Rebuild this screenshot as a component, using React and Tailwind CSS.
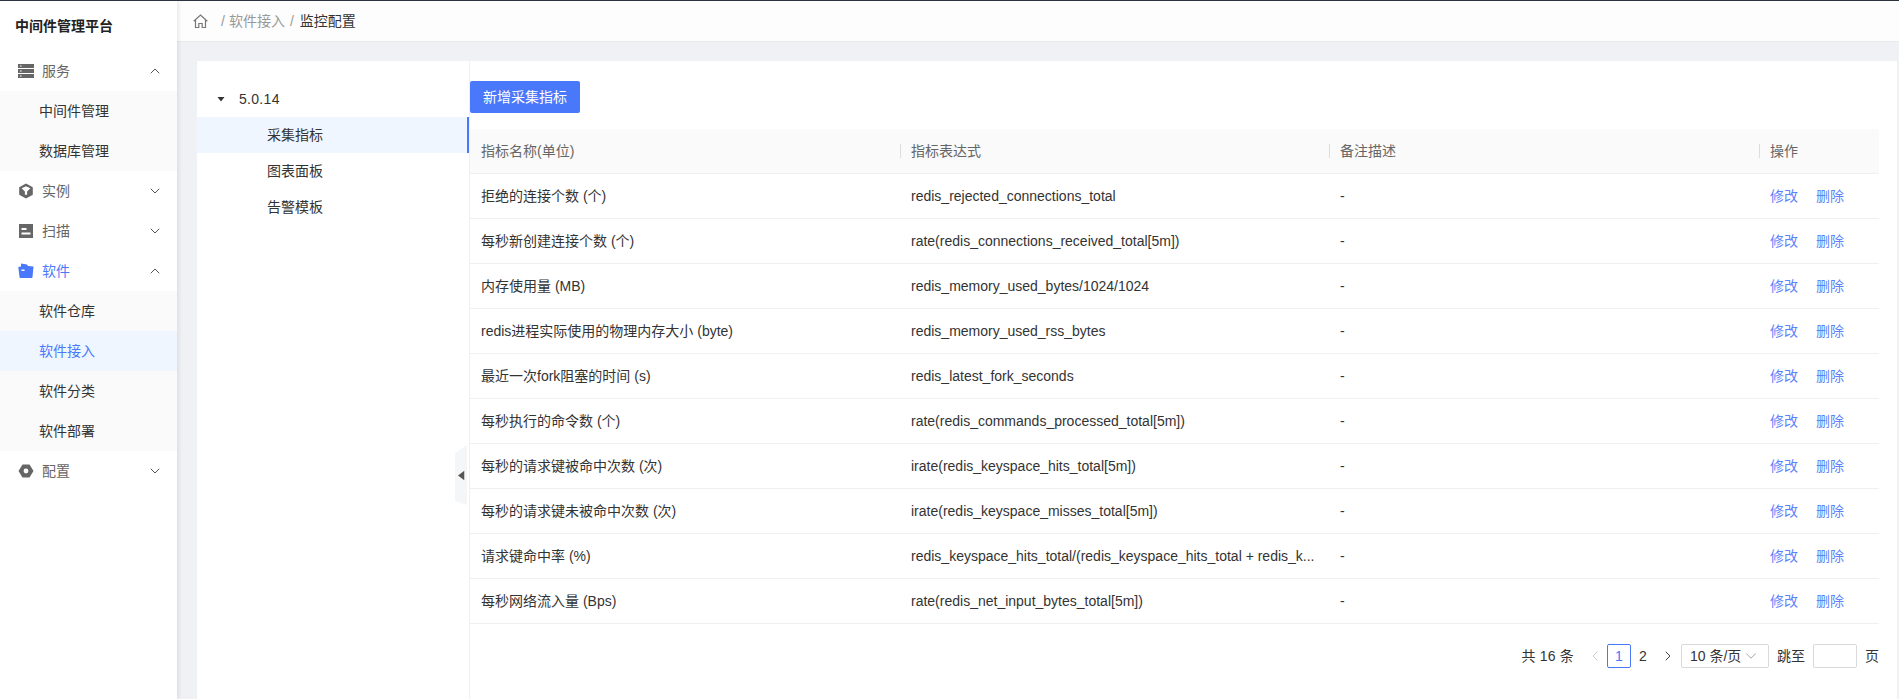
import { ChevronUp, ChevronDown, ChevronLeft, ChevronRight } from 'lucide-react';

const FONT = "font-['Liberation_Sans','Noto_Sans_CJK_SC',sans-serif]";

const ROWS = [
  ['拒绝的连接个数 (个)', 'redis_rejected_connections_total'],
  ['每秒新创建连接个数 (个)', 'rate(redis_connections_received_total[5m])'],
  ['内存使用量 (MB)', 'redis_memory_used_bytes/1024/1024'],
  ['redis进程实际使用的物理内存大小 (byte)', 'redis_memory_used_rss_bytes'],
  ['最近一次fork阻塞的时间 (s)', 'redis_latest_fork_seconds'],
  ['每秒执行的命令数 (个)', 'rate(redis_commands_processed_total[5m])'],
  ['每秒的请求键被命中次数 (次)', 'irate(redis_keyspace_hits_total[5m])'],
  ['每秒的请求键未被命中次数 (次)', 'irate(redis_keyspace_misses_total[5m])'],
  ['请求键命中率 (%)', 'redis_keyspace_hits_total/(redis_keyspace_hits_total + redis_k...'],
  ['每秒网络流入量 (Bps)', 'rate(redis_net_input_bytes_total[5m])'],
];

function ServerIcon() {
  return (
    <svg width="16" height="16" viewBox="0 0 16 16" className="text-[#666]">
      <path fill="currentColor" fillRule="evenodd" d="M0 1h16v4H0zM2 2.4h1.6V3.6H2zM0 6h16v4H0zM2 7.4h1.6V8.6H2zM0 11h16v4H0zM2 12.4h1.6V13.6H2z" />
    </svg>
  );
}

function CubeIcon() {
  return (
    <svg width="16" height="16" viewBox="0 0 16 16" className="text-[#666]">
      <path fill="currentColor" d="M8 .5l6.8 3.7v7.6L8 15.5l-6.8-3.7V4.2z" />
      <path fill="#fff" d="M3.6 5.2L8 3.2l4.4 2-3.3 3.4v3.2H6.9V8.6z" />
    </svg>
  );
}

function ScanIcon() {
  return (
    <svg width="16" height="16" viewBox="0 0 16 16" className="text-[#666]">
      <path fill="currentColor" fillRule="evenodd" d="M1 1h14v14H1zM3.5 5v2h5V5zM3.5 9.5v2h9v-2z" />
    </svg>
  );
}

function SoftwareIcon() {
  return (
    <svg width="16" height="16" viewBox="0 0 16 16" className="text-[#4a78fb]">
      <path fill="currentColor" fillRule="evenodd" d="M3 0.5L9 1.5 10 3 15.5 3.5 14.5 14a1 1 0 0 1-1 1H2.5a1 1 0 0 1-1-1L.3 4 3 3.5zM3.5 6.5v1.5h3V6.5z" />
    </svg>
  );
}

function ConfigIcon() {
  return (
    <svg width="16" height="16" viewBox="0 0 16 16" className="text-[#666]">
      <path fill="currentColor" fillRule="evenodd" d="M4.5 1.5h7L15.5 8l-4 6.5h-7L.5 8zM8 5.6a2.4 2.4 0 1 0 0 4.8 2.4 2.4 0 0 0 0-4.8z" />
    </svg>
  );
}

function HomeIcon() {
  return (
    <svg width="15" height="15" viewBox="0 0 15 15" fill="none" stroke="#777" strokeWidth="1.2" className="shrink-0">
      <path d="M.7 7.2L7.5 1l6.8 6.2M2.5 6v7.5h3.3V9.5h3.4v4h3.3V6" />
    </svg>
  );
}

function Caret({ size = 8, className }) {
  return (
    <svg width={size} height={size} viewBox="0 0 8 8" className={className}>
      <path fill="currentColor" d="M.5 2h7L4 6.5z" />
    </svg>
  );
}

function MenuGroup({ icon, label, open, active }) {
  return (
    <div className={`h-10 flex items-center pl-[18px] pr-[14px] ${active ? 'text-[#4a78fb]' : 'text-[#666]'}`}>
      <span className="w-6 shrink-0">{icon}</span>
      <span className="flex-1 text-sm">{label}</span>
      {open ? <ChevronUp size={16} strokeWidth={1.5} className="text-[#555]" /> : <ChevronDown size={16} strokeWidth={1.5} className="text-[#555]" />}
    </div>
  );
}

function SubItem({ label, active }) {
  return (
    <div className={`h-10 flex items-center pl-[39px] text-sm ${active ? 'bg-[#eff6ff] text-[#4a78fb]' : 'text-[#333]'}`}>{label}</div>
  );
}

function Sidebar() {
  return (
    <aside className="w-[177px] shrink-0 bg-white shadow-[2px_0_4px_rgba(0,0,0,0.08)] z-10">
      <div className="h-[50px] flex items-center pl-[15px] text-sm font-bold text-[#222]">中间件管理平台</div>
      <MenuGroup icon={<ServerIcon />} label="服务" open />
      <div className="bg-[#fafafa]">
        <SubItem label="中间件管理" />
        <SubItem label="数据库管理" />
      </div>
      <MenuGroup icon={<CubeIcon />} label="实例" />
      <MenuGroup icon={<ScanIcon />} label="扫描" />
      <MenuGroup icon={<SoftwareIcon />} label="软件" open active />
      <div className="bg-[#fafafa]">
        <SubItem label="软件仓库" />
        <SubItem label="软件接入" active />
        <SubItem label="软件分类" />
        <SubItem label="软件部署" />
      </div>
      <MenuGroup icon={<ConfigIcon />} label="配置" />
    </aside>
  );
}

function VersionTree() {
  return (
    <div className="relative w-[273px] shrink-0 border-r border-[#f0f0f0] pt-5">
      <div className="h-9 flex items-center pl-5 text-sm text-[#333]">
        <Caret className="text-[#333] mr-[14px]" />
        <span className="tracking-[0.3px]">5.0.14</span>
      </div>
      <div className="h-9 flex items-center pl-[70px] text-sm text-[#333] bg-[#eff6ff] border-r-2 border-[#4a78fb]">采集指标</div>
      <div className="h-9 flex items-center pl-[70px] text-sm text-[#333]">图表面板</div>
      <div className="h-9 flex items-center pl-[70px] text-sm text-[#333]">告警模板</div>
      <div className="absolute right-[2px] top-[384px] w-3 h-[60px] flex items-center justify-center bg-[#f5f6f8] [clip-path:polygon(0_8px,100%_0,100%_100%,0_calc(100%-4px))]">
        <Caret size={11} className="text-[#555] rotate-90 shrink-0" />
      </div>
    </div>
  );
}

function MetricTable() {
  return (
    <table className="w-full table-fixed border-collapse text-sm">
      <colgroup>
        <col className="w-[430px]" />
        <col className="w-[429px]" />
        <col className="w-[430px]" />
        <col className="w-[120px]" />
      </colgroup>
      <thead>
        <tr className="h-[44px] bg-[#fafafa] border-b border-[#f0f0f0] text-[#666]">
          <th className="font-normal text-left px-[11px]">指标名称(单位)</th>
          {['指标表达式', '备注描述', '操作'].map((title) => (
            <th key={title} className="relative font-normal text-left px-[11px]">
              <span className="absolute left-0 top-1/2 -translate-y-1/2 w-px h-[14px] bg-[#ddd]" />
              {title}
            </th>
          ))}
        </tr>
      </thead>
      <tbody>
        {ROWS.map(([name, expr]) => (
          <tr key={name} className="h-[45px] border-b border-[#f0f0f0] text-[#333]">
            <td className="px-[11px] whitespace-nowrap">{name}</td>
            <td className="px-[11px] whitespace-nowrap">{expr}</td>
            <td className="px-[11px]">-</td>
            <td className="px-[11px] text-[#5b84fb] whitespace-nowrap">
              <span className="mr-[18px]">修改</span>
              <span>删除</span>
            </td>
          </tr>
        ))}
      </tbody>
    </table>
  );
}

function Pagination() {
  return (
    <div className="mt-5 h-6 flex items-center justify-end text-sm text-[#333]">
      <span className="mr-[13px] tracking-[0.2px]">共 16 条</span>
      <ChevronLeft size={16} strokeWidth={1.5} className="text-[#ccc] mr-[4px]" />
      <span className="w-6 h-6 flex items-center justify-center border border-[#4a78fb] rounded-[2px] text-[#4a78fb]">1</span>
      <span className="w-6 h-6 flex items-center justify-center mr-[4px]">2</span>
      <ChevronRight size={16} strokeWidth={1.5} className="text-[#444] ml-[1px] mr-[5px]" />
      <span className="w-[88px] h-6 flex items-center justify-between pl-2 pr-[8px] border border-[#d9d9d9] rounded-[2px] whitespace-nowrap">
        10 条/页
        <ChevronDown size={18} strokeWidth={1} className="text-[#888]" />
      </span>
      <span className="ml-2 mr-2">跳至</span>
      <span className="w-11 h-6 border border-[#d9d9d9] rounded-[2px]" />
      <span className="ml-2">页</span>
    </div>
  );
}

export default function App() {
  return (
    <div className={`${FONT} h-[699px] overflow-hidden flex flex-col border-t border-[#2d3340] bg-[#eff1f5]`}>
      <div className="flex-1 flex min-h-0">
        <Sidebar />
        <main className="flex-1 min-w-0 flex flex-col">
          <header className="h-[41px] shrink-0 bg-[#fdfdfd] border-b border-[#e9e9e9] flex items-center pl-4 text-sm text-[#999]">
            <HomeIcon />
            <span className="ml-[13px]">/</span>
            <span className="ml-[4px]">软件接入</span>
            <span className="ml-[5px]">/</span>
            <span className="ml-[6px] text-[#333]">监控配置</span>
          </header>
          <div className="flex-1 min-h-0 pt-[19px] pl-5 pr-[2px]">
            <div className="h-full bg-white flex">
              <VersionTree />
              <section className="flex-1 min-w-0 pt-5 pr-[18px]">
                <button className="h-8 w-[110px] bg-[#4a78fb] rounded-[2px] text-sm text-white">新增采集指标</button>
                <div className="mt-4">
                  <MetricTable />
                </div>
                <Pagination />
              </section>
            </div>
          </div>
        </main>
      </div>
    </div>
  );
}
